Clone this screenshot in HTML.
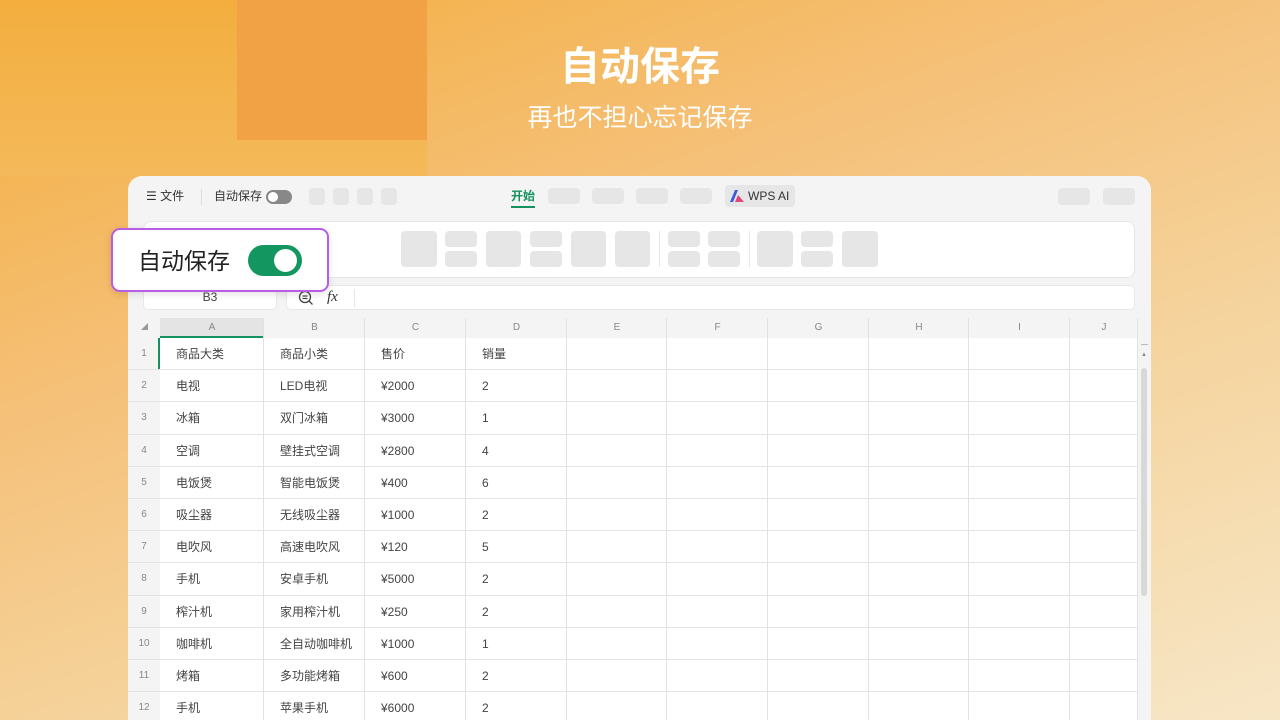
<!DOCTYPE html><html><head><meta charset="utf-8"><style>
*{margin:0;padding:0;box-sizing:border-box}
html{background:#f7e6c6}
body{width:1280px;height:720px;overflow:hidden;position:relative;font-family:"Liberation Sans","Noto Sans CJK SC",sans-serif;background:linear-gradient(160deg,#f3ad3c 0%,#f5c078 35%,#f5d49e 65%,#f7e6c6 100%)}
.abs{position:absolute}
.g{background:#e6e6e6;border-radius:4px;position:absolute}
.cell{position:absolute;font-size:12px;color:#444;line-height:14px}
.hdr{position:absolute;font-size:10px;color:#888;text-align:center;line-height:12px}
</style></head><body>
<div class="abs" style="left:0;top:0;width:427px;height:176px;background:linear-gradient(180deg,#f3ae3e,#f4b95a)"></div>
<div class="abs" style="left:237px;top:0;width:190px;height:140px;background:#f0a245"></div>
<div class="abs" style="left:0;top:34px;width:1280px;text-align:center;color:#fff;font-size:40px;font-weight:bold">自动保存</div>
<div class="abs" style="left:0;top:98px;width:1280px;text-align:center;color:#fff;font-size:25px">再也不担心忘记保存</div>

<div class="abs" style="left:128px;top:176px;width:1023px;height:544px;background:#f4f4f4;border-radius:14px 14px 0 0;overflow:hidden">
 <div class="abs" style="left:18px;top:13px;font-size:12px;color:#333;line-height:14px">☰ 文件</div>
 <div class="abs" style="left:73px;top:13px;width:1px;height:16px;background:#ddd"></div>
 <div class="abs" style="left:86px;top:13px;font-size:12px;color:#333;line-height:14px">自动保存</div>
 <div class="abs" style="left:138px;top:14px;width:26px;height:14px;border-radius:7px;background:#888"><div class="abs" style="left:2px;top:2px;width:10px;height:10px;border-radius:5px;background:#fff"></div></div>
 <div class="g" style="left:181px;top:12px;width:16px;height:17px"></div><div class="g" style="left:205px;top:12px;width:16px;height:17px"></div><div class="g" style="left:229px;top:12px;width:16px;height:17px"></div><div class="g" style="left:253px;top:12px;width:16px;height:17px"></div>
 <div class="abs" style="left:383px;top:13px;font-size:12px;color:#13925f;font-weight:bold;line-height:14px">开始</div>
 <div class="abs" style="left:383px;top:30px;width:24px;height:2px;background:#13925f"></div>
 <div class="g" style="left:420px;top:12px;width:32px;height:16px"></div><div class="g" style="left:464px;top:12px;width:32px;height:16px"></div><div class="g" style="left:508px;top:12px;width:32px;height:16px"></div><div class="g" style="left:552px;top:12px;width:32px;height:16px"></div>
 <div class="g" style="left:597px;top:9px;width:70px;height:22px;font-size:12px;color:#333;padding:4px 0 0 23px;line-height:14px">WPS AI</div>
 <svg class="abs" style="left:601px;top:13px" width="16" height="14"><path d="M1 13 L6 1 L9 1 L4 13Z" fill="#3b5bdb"/><path d="M6 13 L9 6 L15 13Z" fill="#e0457b"/></svg>
 <div class="g" style="left:930px;top:12px;width:32px;height:17px"></div><div class="g" style="left:975px;top:12px;width:32px;height:17px"></div>
 <div class="abs" style="left:15px;top:45px;width:992px;height:57px;background:#fff;border:1px solid #e6e6e6;border-radius:8px"></div>
 <div class="g" style="left:273px;top:55px;width:36px;height:36px"></div>
 <div class="g" style="left:317px;top:55px;width:32px;height:16px"></div><div class="g" style="left:317px;top:75px;width:32px;height:16px"></div>
 <div class="g" style="left:358px;top:55px;width:35px;height:36px"></div>
 <div class="g" style="left:402px;top:55px;width:32px;height:16px"></div><div class="g" style="left:402px;top:75px;width:32px;height:16px"></div>
 <div class="g" style="left:443px;top:55px;width:35px;height:36px"></div>
 <div class="g" style="left:487px;top:55px;width:35px;height:36px"></div>
 <div class="abs" style="left:531px;top:55px;width:1px;height:36px;background:#e6e6e6"></div>
 <div class="g" style="left:540px;top:55px;width:32px;height:16px"></div><div class="g" style="left:540px;top:75px;width:32px;height:16px"></div>
 <div class="g" style="left:580px;top:55px;width:32px;height:16px"></div><div class="g" style="left:580px;top:75px;width:32px;height:16px"></div>
 <div class="abs" style="left:621px;top:55px;width:1px;height:36px;background:#e6e6e6"></div>
 <div class="g" style="left:629px;top:55px;width:36px;height:36px"></div>
 <div class="g" style="left:673px;top:55px;width:32px;height:16px"></div><div class="g" style="left:673px;top:75px;width:32px;height:16px"></div>
 <div class="g" style="left:714px;top:55px;width:36px;height:36px"></div>
 <div class="abs" style="left:15px;top:109px;width:134px;height:25px;background:#fff;border:1px solid #e8e8e8;border-radius:5px;font-size:12px;color:#444;text-align:center;padding-top:4px;line-height:14px">B3</div>
 <div class="abs" style="left:158px;top:109px;width:849px;height:25px;background:#fff;border:1px solid #e8e8e8;border-radius:5px"></div>
 <svg class="abs" style="left:170px;top:114px" width="16" height="16" fill="none" stroke="#444" stroke-width="1.3"><circle cx="7" cy="7" r="5.5"/><path d="M4.5 6h5M4.5 8.5h5M11 11l3.5 3.5"/></svg>
 <div class="abs" style="left:199px;top:113px;font-size:15px;color:#333;font-style:italic;font-family:'Liberation Serif',serif;line-height:16px">fx</div>
 <div class="abs" style="left:226px;top:113px;width:1px;height:18px;background:#e6e6e6"></div>
 <div class="abs" style="left:0;top:142px;width:1010px;height:20px;background:#f4f4f4"></div>
 <div class="abs" style="left:32px;top:142px;width:104px;height:20px;background:#e4e4e4;border-bottom:2px solid #13925f"></div>
 <div class="abs" style="left:0;top:162px;width:1010px;height:400px;background:#fff"></div>
 <div class="abs" style="left:0;top:162px;width:32px;height:400px;background:#f4f4f4"></div>
 <div class="abs" style="left:1010px;top:162px;width:13px;height:400px;background:#f4f4f4"></div>
 <div class="abs" style="left:1013px;top:192px;width:6px;height:228px;background:#d8d8d8;border-radius:3px"></div>
 <div class="abs" style="left:1013px;top:168px;width:7px;height:1px;background:#bbb"></div>
 <div class="abs" style="left:1013px;top:176px;font-size:6px;color:#888;line-height:6px">▲</div>
 <div class="abs" style="left:13px;top:146px;font-size:7px;color:#999">◢</div>
 <div class="abs" style="left:30px;top:162px;width:2px;height:32px;background:#13925f"></div>
 <div id="grid"></div>
</div>

<div class="abs" style="left:111px;top:228px;width:218px;height:64px;background:#fff;border:2px solid #b75de6;border-radius:9px;box-shadow:0 2px 8px rgba(0,0,0,.12)"></div>
<div class="abs" style="left:138px;top:247px;font-size:23px;color:#222;line-height:28px">自动保存</div>
<div class="abs" style="left:248px;top:245px;width:54px;height:31px;border-radius:16px;background:#13965f"><div class="abs" style="left:26px;top:4px;width:23px;height:23px;border-radius:12px;background:#fff"></div></div>
<script>
var xs=[32,136,237,338,439,539,640,741,841,942,1010],L="ABCDEFGHIJ",h="";
for(var i=0;i<10;i++){var w=xs[i+1]-xs[i];h+='<div class="hdr" style="left:'+xs[i]+'px;top:146px;width:'+w+'px">'+L[i]+'</div>';h+='<div class="abs" style="left:'+(xs[i+1]-1)+'px;top:142px;width:1px;height:420px;background:#e2e2e2"></div>';}
var d=[["商品大类","商品小类","售价","销量"],["电视","LED电视","¥2000","2"],["冰箱","双门冰箱","¥3000","1"],["空调","壁挂式空调","¥2800","4"],["电饭煲","智能电饭煲","¥400","6"],["吸尘器","无线吸尘器","¥1000","2"],["电吹风","高速电吹风","¥120","5"],["手机","安卓手机","¥5000","2"],["榨汁机","家用榨汁机","¥250","2"],["咖啡机","全自动咖啡机","¥1000","1"],["烤箱","多功能烤箱","¥600","2"],["手机","苹果手机","¥6000","2"]];
for(var r=0;r<12;r++){var y=162+r*32.2;h+='<div class="hdr" style="left:0;top:'+(y+10)+'px;width:32px">'+(r+1)+'</div>';h+='<div class="abs" style="left:0;top:'+(y+31.2)+'px;width:1010px;height:1px;background:#e4e4e4"></div>';for(var c=0;c<4;c++)h+='<div class="cell" style="left:'+(xs[c]+16)+'px;top:'+(y+9)+'px">'+d[r][c]+'</div>';}
document.getElementById('grid').innerHTML=h;
</script>
</body></html>
